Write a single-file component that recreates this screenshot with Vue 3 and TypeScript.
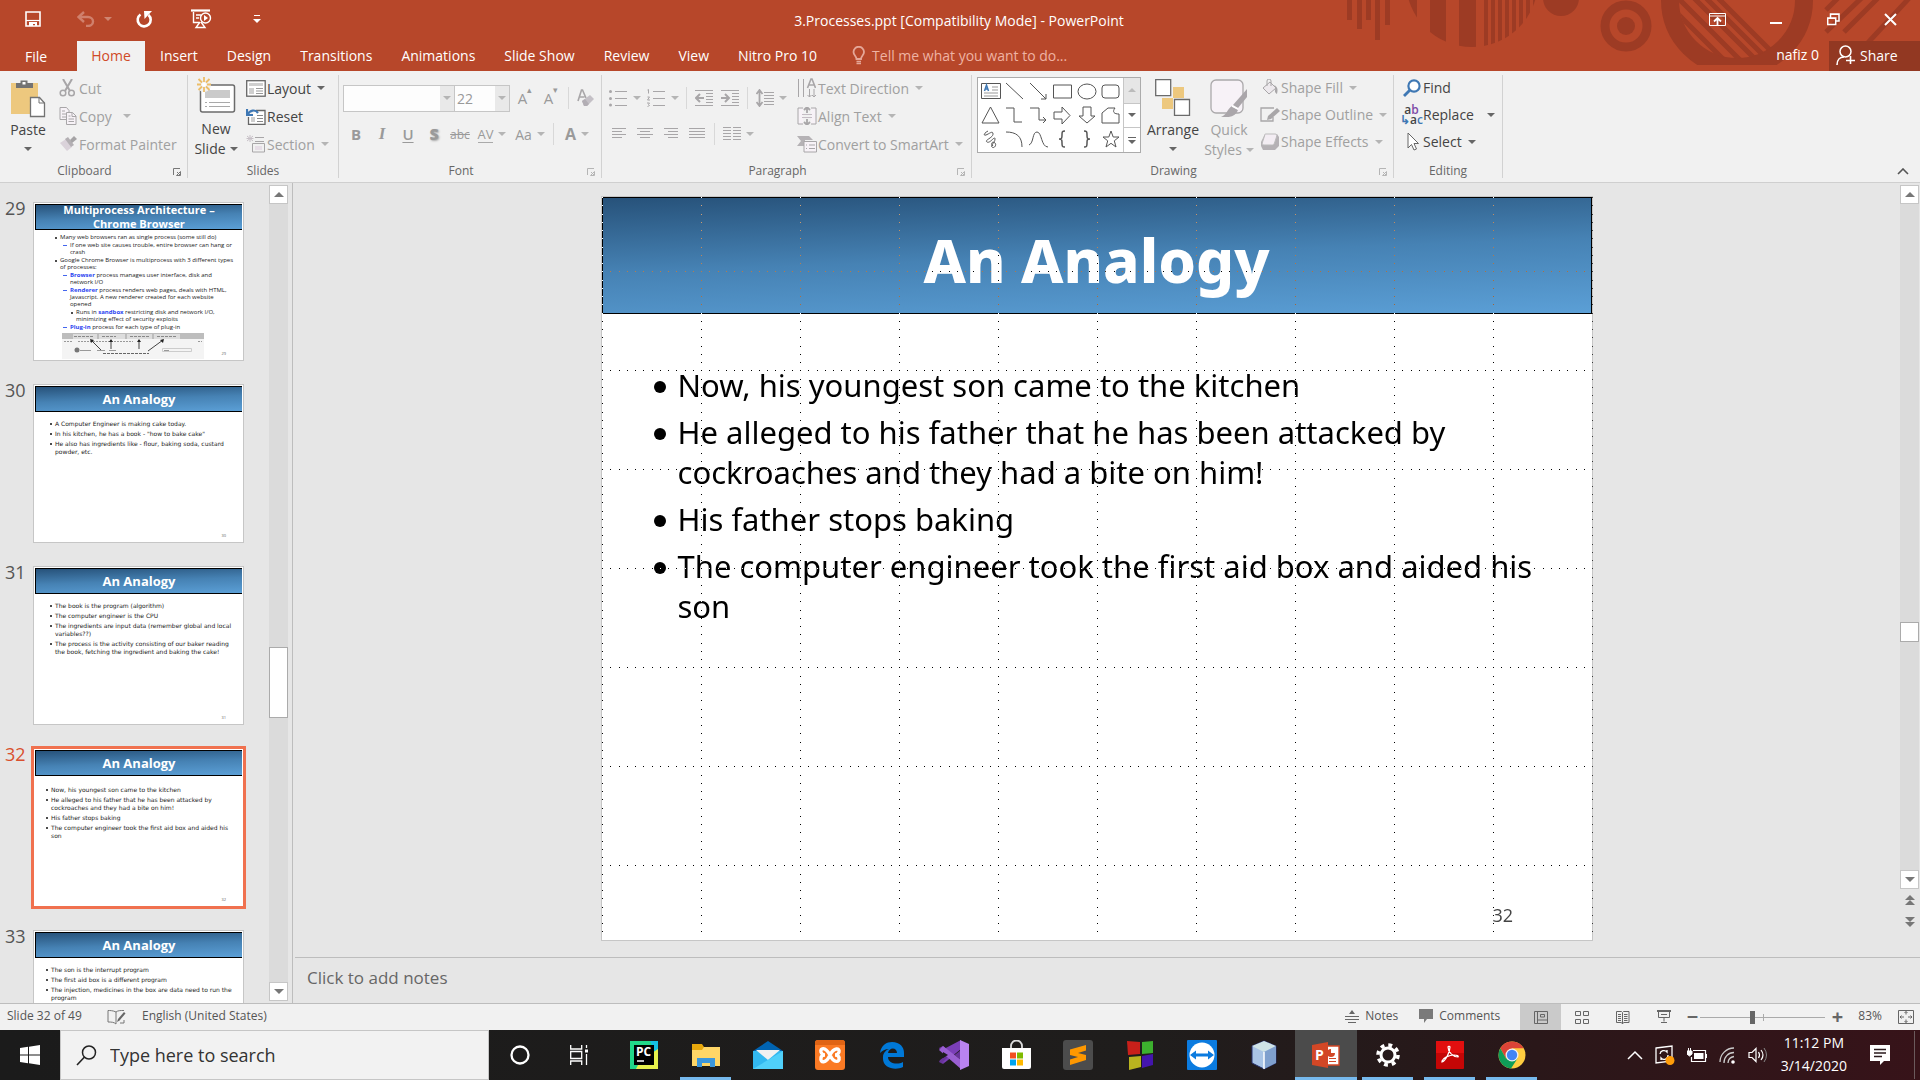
<script setup lang="ts">
import { h, ref } from 'vue'

interface Icon { w: number; h: number; body: string }
interface ThumbLine { level: 1 | 2 | 3; strong?: string; pre?: string; text: string }
interface Thumb { n: number; title: string; kind: string; lines: ThumbLine[] }

const G = '#A8A6A8'
const D = '#666666'
const hl = (x1: number, x2: number, ys: number[]) => ys.map(y => `M${x1} ${y}H${x2}`).join('')

const icons: Record<string, Icon> = {
  save: { w: 16, h: 16, body: '<path d="M1 1h14v14H1z" fill="none" stroke="#fff" stroke-width="1.6"/><path d="M1 9.5h14" stroke="#fff" stroke-width="1.2"/><path d="M4 11h8v4h-2v-2H8v2H4z" fill="#fff"/>' },
  undo: { w: 18, h: 16, body: '<path d="M2 6h9a5 4.5 0 0 1 0 9H9" fill="none" stroke="#D0806C" stroke-width="2.4"/><path d="M7 1L1.500 6L7 11" fill="none" stroke="#D0806C" stroke-width="2.4"/>' },
  redo: { w: 18, h: 18, body: '<path d="M5.500 4.500A6.500 6.500 0 1 0 13.500 5" fill="none" stroke="#fff" stroke-width="2.6"/><path d="M9 1h8l-7.500 8z" fill="#fff"/>' },
  show: { w: 22, h: 20, body: '<path d="M1 1.500h19" stroke="#fff" stroke-width="2.2"/><path d="M3.500 3v10.500H9M6 6h5M6 9h3" fill="none" stroke="#fff" stroke-width="1.4"/><circle cx="15.500" cy="9" r="5" fill="none" stroke="#fff" stroke-width="1.4"/><path d="M14 6l4 3l-4 3z" fill="#fff"/><path d="M10 13l-4 5.500h9L11 13" fill="none" stroke="#fff" stroke-width="1.4"/>' },
  bulb: { w: 14, h: 19, body: '<path d="M4.500 13C4.500 10 1.500 9.500 1.500 6a5.200 5.200 0 0 1 10.500 0C12 9.500 9 10 9 13z" fill="none" stroke="#E5A798" stroke-width="1.8"/><path d="M4.500 15.500h4.500M4.500 17.500h4.500" stroke="#E5A798" stroke-width="1.5"/>' },
  ribopt: { w: 17, h: 13, body: '<path d="M.500 .500h16v12H.500zM.500 3h16" fill="none" stroke="#fff"/><path d="M8.500 12V5.500M5 8.500l3.500-3.500L12 8.500" fill="none" stroke="#fff" stroke-width="1.8"/>' },
  min: { w: 13, h: 13, body: '<path d="M0 10h12" stroke="#fff" stroke-width="2"/>' },
  restore: { w: 13, h: 13, body: '<path d="M.700 5h8v6.500h-8zM3.500 5V1h8.500v7H9" fill="none" stroke="#fff" stroke-width="1.5"/><path d="M3 1.500h9M0 5.500h9" stroke="#fff"/>' },
  close: { w: 13, h: 13, body: '<path d="M1 1l11 11M12 1L1 12" stroke="#fff" stroke-width="2"/>' },
  person: { w: 19, h: 21, body: '<circle cx="9.500" cy="6.500" r="5.500" fill="none" stroke="#fff" stroke-width="1.5"/><path d="M1 20c0-5 3-8 7-8M14.500 11v8M10 15.500h9" fill="none" stroke="#fff" stroke-width="1.6"/>' },
  paste: { w: 36, h: 39, body: '<path d="M1 4h27v31H1z" fill="#EDC87E"/><path d="M6 9V4h4.500V1.500h7V4H23v5z" fill="#737373"/><rect x="12.500" y="3" width="3" height="2.500" fill="#fff"/><path d="M20.500 18.500h9l5 5.500v13.500h-14z" fill="#fff" stroke="#737373" stroke-width="1.3"/><path d="M29 18.500V24h5.500" fill="none" stroke="#737373"/>' },
  cut: { w: 17, h: 18, body: `<path d="M4 0l7 12M13 0L6 12" stroke="${G}" stroke-width="2"/><circle cx="4" cy="14" r="2.800" fill="none" stroke="${G}" stroke-width="1.5"/><circle cx="12.500" cy="14" r="2.800" fill="none" stroke="${G}" stroke-width="1.5"/>` },
  copy: { w: 18, h: 18, body: `<path d="M1 .500h6.500l2.500 3v9H1z" fill="#F7F2F7" stroke="${G}"/><path d="M3 4h3M3 7h4M3 10h4" stroke="${G}"/><path d="M7.500 5.500h6l3.500 3.500v8.500H7.500z" fill="#F7F2F7" stroke="${G}"/><path d="M13 5.500V9.500h4M9.500 9h2M9.500 12h5.500M9.500 14.500h5.500" fill="none" stroke="${G}"/>` },
  painter: { w: 18, h: 16, body: '<path d="M1 7l6-4l6 8l-5 4z" fill="#DAD2DA"/><path d="M6 3l3-2l6 8l-3 2z" fill="#B3AFB3"/><path d="M11 4l4-4l3 3l-5 4z" fill="#A5A3A5"/>' },
  newslide: { w: 40, h: 36, body: '<rect x="4.500" y="8" width="34" height="27" rx="2" fill="#fff" stroke="#6B6B6B" stroke-width="1.5"/><rect x="9" y="13" width="25" height="8" fill="#CACACA"/><path d="M9 25.500h2M13 25.500h21M9 29.500h2M13 29.500h21" stroke="#A9A9A9"/><circle cx="8" cy="8" r="7" fill="#F1F1F1"/><path d="M8 0v5M8 10v5M1 7.500h4M11 7.500h4M2.500 2l3.500 3.500M13.500 2L10 5.500M2.500 13L6 9.500M13.500 13L10 9.500" stroke="#ECBD68" stroke-width="1.8"/><circle cx="8" cy="7.500" r="2" fill="#fff"/>' },
  layout: { w: 20, h: 17, body: '<rect x=".700" y=".700" width="18.500" height="15.500" fill="#fff" stroke="#666" stroke-width="1.3"/><path d="M3 3h14v3H3zM3 8h5v6H3z" fill="#CFCFCF"/><path d="M10 8.500h7M10 11h7M10 13.500h7" stroke="#999"/>' },
  reset: { w: 20, h: 17, body: '<path d="M10 2.500h9v14H2.500V9" fill="#fff" stroke="#666" stroke-width="1.3"/><path d="M5 9h4v5H5z" fill="#CFCFCF"/><path d="M11 7.500h6M11 10.500h6M11 13.500h6" stroke="#888"/><path d="M1 1v6h6M1.500 6.500C4 2 9 1 12 5" fill="none" stroke="#3F78B4" stroke-width="2.2"/>' },
  section: { w: 20, h: 18, body: `<path d="M4 0v7M.500 3.500h7M1 1l6 5M7 1L1 6" stroke="#C7C0C7"/><path d="M9 2.500h9M9 6.500h9M6.500 8.500h12v8.500h-12z" fill="none" stroke="${G}"/><path d="M9 11h7v4H9z" fill="#E7DEE7"/>` },
  eraser: { w: 18, h: 18, body: `<path d="M1 12L4.500 1h1L9 9M2.500 8h5" fill="none" stroke="${G}" stroke-width="1.6"/><path d="M5 12l8-6l4 4l-7 7H7z" fill="#C4C0C6"/><path d="M5 12l3-2l4 5l-2 2H7z" fill="#B2AEB4"/>` },
  bullets: { w: 19, h: 18, body: `<path d="${hl(6, 18, [2.5, 9.5, 16.5])}" stroke="${G}"/><circle cx="1.500" cy="2.500" r="1.500" fill="${G}"/><circle cx="1.500" cy="9.500" r="1.500" fill="${G}"/><circle cx="1.500" cy="16" r="1.500" fill="${G}"/>` },
  numbers: { w: 19, h: 18, body: `<path d="${hl(6, 18, [2.5, 9.5, 16.5])}" stroke="${G}"/><path d="M.500 1l1-.500V4.500M.500 8h2L.500 11h2.500M0 14h2.500l-1 1.500l1 1L.500 17.500" fill="none" stroke="${G}"/>` },
  outdent: { w: 18, h: 18, body: `<path d="${hl(0, 18, [1.5, 16.5])}${hl(11, 18, [4.5, 7.5, 10.5, 13.5])}" stroke="${G}"/><path d="M1 9h8M5 5L1 9l4 4" fill="none" stroke="${G}" stroke-width="2"/>` },
  indent: { w: 18, h: 18, body: `<path d="${hl(0, 18, [1.5, 16.5])}${hl(11, 18, [4.5, 7.5, 10.5, 13.5])}" stroke="${G}"/><path d="M0 9h8M4 5l4 4l-4 4" fill="none" stroke="${G}" stroke-width="2"/>` },
  spacing: { w: 18, h: 18, body: `<path d="${hl(8, 18, [3.5, 6.5, 9.5, 12.5, 15.5])}" stroke="${G}"/><path d="M3.500 1v16M.500 5l3-4l3 4M.500 13l3 4l3-4" fill="none" stroke="${G}" stroke-width="1.8"/>` },
  left: { w: 16, h: 12, body: `<path d="M1 .500h14M1 3.500h10M1 6.500h14M1 9.500h10" stroke="${G}"/>` },
  center: { w: 16, h: 12, body: `<path d="M0 .500h16M3 3.500h10M0 6.500h16M3 9.500h10" stroke="${G}"/>` },
  right: { w: 16, h: 12, body: `<path d="M1 .500h14M5 3.500h10M1 6.500h14M5 9.500h10" stroke="${G}"/>` },
  justify: { w: 16, h: 12, body: `<path d="${hl(0, 16, [0.5, 3.5, 6.5, 9.5])}" stroke="${G}"/>` },
  columns: { w: 18, h: 14, body: `<path d="${hl(0, 8, [0.5, 3.5, 6.5, 9.5, 12.5])}${hl(10, 18, [0.5, 3.5, 6.5, 9.5, 12.5])}" stroke="${G}"/>` },
  textdir: { w: 19, h: 20, body: `<path d="M1.500 1v18M6.500 1v18M12.500 11v8M17 11v8M10.500 17l2 2l2-2M15 17l2 2l2-2" fill="none" stroke="${G}"/><path d="M10.500 10l3.500-9h1l3.500 9M12 7h5" fill="none" stroke="${G}" stroke-width="1.6"/>` },
  aligntext: { w: 20, h: 18, body: `<path d="M6 1H1v16h5M14 1h5v16h-5" fill="#F7F2F7" stroke="${G}"/><path d="M5 7.500h10M5 10.500h10" stroke="#C4BCC4"/><path d="M10 0v6M7 3l3-3l3 3M10 18v-6M7 15l3 3l3-3" fill="none" stroke="${G}" stroke-width="1.8"/>` },
  smartart: { w: 20, h: 17, body: `<path d="M0 0h12l4 4H8v6H0l4-5z" fill="#B5B2B5"/><path d="M7 5.500h12.500v10.500H7z" fill="#F7F2F7" stroke="${G}"/><path d="M9 9h1M12 9h6M9 12.500h1M12 12.500h6" stroke="${G}"/>` },
  fill: { w: 18, h: 17, body: `<path d="M2 9l7-6l6 6l-7 6z" fill="#EDE9ED" stroke="${G}"/><path d="M6 7V2a2 2 0 0 1 4 0v5" fill="none" stroke="${G}"/><path d="M13 6c4 2 4 5 3 9c-2-1-3-4-1-6z" fill="${G}"/>` },
  outline: { w: 20, h: 16, body: `<path d="M14 1H1v13h12V10" fill="none" stroke="${G}" stroke-width="1.3"/><path d="M7 13l1-4l9-8l3 3l-9 8z" fill="${G}"/>` },
  effects: { w: 20, h: 18, body: '<path d="M5 1h12l2 3v9l-4 4H3l-2-4V9z" fill="#B5B1B5"/><path d="M6 1h9c2 0 2 1 1.500 3l-2 6c-1 2-1 2-3 2H4c-2 0-2-1-1.500-3l2-6C5 1 5 1 6 1z" fill="#F3EDF3" stroke="#BBB"/>' },
  arrange: { w: 36, h: 37, body: '<path d="M18 8h11v11H18zM7 19h11v11H7z" fill="#EDC87E"/><path d="M.700 .700h15v16h-15zM19.500 20.500h15v16h-15z" fill="#fff" stroke="#6B6B6B" stroke-width="1.3"/>' },
  quick: { w: 38, h: 38, body: '<rect x="1" y="1" width="32" height="33" rx="5" fill="#F7F2F7" stroke="#ABA9AB" stroke-width="1.3"/><path d="M37 10v8L28 29l-5-3z" fill="#AAA6AA"/><path d="M22 27l6 4c-2 6-8 8-17 7c6-2 6-8 11-11z" fill="#AAA6AA"/><path d="M22 27l6 3" stroke="#fff" stroke-width="1.5"/>' },
  find: { w: 18, h: 18, body: '<circle cx="11" cy="7" r="5.600" fill="#fff" stroke="#3F78B4" stroke-width="2.2"/><path d="M7 11l-6 6" stroke="#3F78B4" stroke-width="2.8"/>' },
  select: { w: 18, h: 19, body: '<path d="M5 1v15l3.500-3.500l2.500 5.500l2.500-1l-2.500-5.500h4.500z" fill="#fff" stroke="#666"/>' },
  launch: { w: 8, h: 8, body: '<path d="M.500 7V.500H7M4 4l3 3M7.500 3.500v4h-4z" fill="none" stroke="currentColor"/>' },
  spell: { w: 19, h: 15, body: '<path d="M9 2v12M9 2C6 .500 3 .500 1 .500v11.500c3 0 6 0 8 2M9 2c2-1.500 4-1.500 8-1.500M17 10v3h-4" fill="none" stroke="#777"/><path d="M10 12l1-3l6-7l1.500 1.500l-6 7z" fill="#666"/>' },
  notes: { w: 14, h: 13, body: `<path d="M4 4l3-4l3 4z" fill="${D}"/><path d="M0 6.500h14M0 9.500h14M3 12.500h8" stroke="${D}"/>` },
  comment: { w: 16, h: 15, body: '<path d="M1 0h14v10H9l-3 4v-4H1z" fill="#7A7A7A"/>' },
  normal: { w: 14, h: 13, body: `<path d="M.500 .500h13v12H.500zM3.500 .500v12M3.500 9h10M6.500 3.500h4v2.500h-4z" fill="none" stroke="${D}"/>` },
  sorter: { w: 14, h: 13, body: `<path d="M.500 .500h5v4h-5zM8.500 .500h5v4h-5zM.500 8.500h5v4h-5zM8.500 8.500h5v4h-5z" fill="none" stroke="${D}"/>` },
  reading: { w: 14, h: 13, body: `<path d="M6.500 2v11M.500 .500h5l1 1l1-1h5.500v11H8l-1.500 1L5 11.500H.500zM2 3.500h3M2 5.500h3M2 7.500h3M2 9.500h3M8 3.500h3.500M8 5.500h3.500M8 7.500h3.500M8 9.500h3.500" fill="none" stroke="${D}"/>` },
  present: { w: 14, h: 14, body: `<path d="M0 1h14" stroke="${D}" stroke-width="2"/><path d="M1.500 2v5.500h11V2M7 7.500v4M4 12.500h6M4 4.500h6" fill="none" stroke="${D}"/>` },
  fit: { w: 16, h: 14, body: `<path d="M.500 .500h15v13H.500z" fill="none" stroke="${D}"/><path d="M8 1.500v3M8 9.500v3M2 7h4M10 7h4M6.500 3l1.500-1.500L9.500 3M6.500 11l1.500 1.500L9.500 11M3.500 5.500L2 7l1.500 1.500M12.500 5.500L14 7l-1.500 1.500" fill="none" stroke="${D}"/>` },
  win: { w: 20, h: 20, body: '<path d="M0 3l8-1.200v7.700H0zM9 1.700L20 0v9.500H9zM0 10.500h8v7.700L0 17zM9 10.500h11V20L9 18.300z" fill="#fff"/>' },
  search: { w: 21, h: 21, body: '<circle cx="13" cy="7.500" r="6.500" fill="none" stroke="#222" stroke-width="1.5"/><path d="M8.500 12L1 20" stroke="#222" stroke-width="1.6"/>' },
  cortana: { w: 20, h: 20, body: '<circle cx="10" cy="10" r="8.500" fill="none" stroke="#fff" stroke-width="2.3"/>' },
  taskview: { w: 25, h: 20, body: '<path d="M.700 0v4h11V0M.700 20v-4h11v4M.700 6.500h11v7H.700zM16.500 0v3M16.500 9v11" fill="none" stroke="#fff" stroke-width="1.3"/><path d="M16.500 4.500v3" stroke="#fff" stroke-width="3"/>' },
  pycharm: { w: 28, h: 28, body: '<path d="M0 0h28v28H0z" fill="#21D789"/><path d="M20 0h8v18z" fill="#14C0E4"/><path d="M28 8v20H6l4-8z" fill="#E7F14C"/><path d="M4 4h20v20H4z" fill="#000"/><path d="M7 20h7" stroke="#fff" stroke-width="1.5"/><text x="6" y="15" font-size="12" font-weight="700" fill="#fff" font-family="Open Sans, sans-serif">PC</text>' },
  explorer: { w: 28, h: 24, body: '<path d="M0 1h10l2 3h14v19H0z" fill="#E8A80C"/><path d="M0 7h10l2-3h16v19H0z" fill="#FFD667"/><path d="M5 24v-9h18v9h-5v-4h-8v4z" fill="#3C97DC"/>' },
  mail: { w: 30, h: 28, body: '<path d="M0 10L15 0l15 10z" fill="#0063B1"/><path d="M0 10h30v18H0z" fill="#32B8F0"/><path d="M3 9h24L15 19z" fill="#F1F1F1"/><path d="M0 28L30 10v18z" fill="#50D0FA"/>' },
  xampp: { w: 30, h: 30, body: '<rect width="30" height="30" rx="3" fill="#FB7A24"/><path d="M0 3q0-3 3-3h24q3 0 3 3v2H0z" fill="#E06414"/><path d="M15 15C10 6 5 8 6 12c1 3 4 3 4 3s-4 0-4 3c-1 5 5 6 9-3c4-8 10-7 9-3c-1 3-4 3-4 3s4 0 4 3c1 4-5 6-9-3z" fill="none" stroke="#fff" stroke-width="3.4"/>' },
  edge: { w: 26, h: 28, body: '<path d="M1 12C2 4 8 1 13 1c8 0 12 5 12 11v4H9c0 7 10 8 15 5v5c-8 4-21 1-20-10c0-4 3-7 6-8c-4 0-7 2-9 4zM9 12h9c0-6-8-6-9 0z" fill="#0078D7"/>' },
  vs: { w: 30, h: 30, body: '<path d="M0 8l4-2L22 20V10L4 24l-4-2l1-2l7-5l-7-5z" fill="#68349A"/><path d="M3 10l19-10v9L6 22l-3 1l8-8z" fill="#7B3FB8"/><path d="M4 6l18 14v9L0 10z" fill="#9A5FD2"/><path d="M4 12v6l5-3z" fill="#1d1c1c"/><path d="M21 0l9 4v22l-9 4z" fill="#B983F0"/>' },
  store: { w: 29, h: 30, body: '<path d="M9 9V6a5 5 0 0 1 11 0v3" fill="none" stroke="#ddd" stroke-width="1.8"/><path d="M0 8h29v19q0 2-2 2H2q-2 0-2-2z" fill="#fff"/><path d="M8 12.500h6v6H8z" fill="#F25022"/><path d="M15 12.500h6v6h-6z" fill="#7FBA00"/><path d="M8 19.500h6v6H8z" fill="#00A4EF"/><path d="M15 19.500h6v6h-6z" fill="#FFB900"/>' },
  sublime: { w: 30, h: 30, body: '<rect width="30" height="30" rx="3" fill="#4C4C4C"/><path d="M7 9.500l16-4.500v5.500l-8 2.500l8 2v5L7 25v-5.500l8-2.500l-8-2z" fill="#FF9800"/>' },
  cubes: { w: 28, h: 30, body: '<path d="M1 1l13 1v12L2 15z" fill="#C9201A"/><path d="M16 2l11-1v12l-11 1z" fill="#3CB02E"/><path d="M3 17l12-1v11L3 30z" fill="#B9B41F"/><path d="M16 16l11-2v11l-11 3z" fill="#4415AD"/>' },
  teamviewer: { w: 30, h: 30, body: '<rect width="30" height="30" rx="1" fill="#0B7BDF"/><circle cx="15" cy="15" r="12.500" fill="#fff"/><path d="M3 15l6-4.500v3h12v-3l6 4.500l-6 4.500v-3H9v3z" fill="#0B7BDF"/>' },
  box: { w: 28, h: 30, body: '<path d="M14 1l12 5v17l-12 6l-12-6V6z" fill="#A9C4E6" stroke="#26306B"/><path d="M14 1l12 5l-12 6L2 6z" fill="#CFE3E6"/><path d="M14 12l12-6v17l-12 6z" fill="#7FA0CE"/><path d="M14 12v17" stroke="#fff" stroke-width="1.5"/>' },
  ppt: { w: 28, h: 28, body: '<path d="M15 5h12v19H15z" fill="#fff" stroke="#D24726" stroke-width="1.4"/><path d="M19 8a4 4 0 1 0 4 4h-4z" fill="#D24726"/><path d="M17 17.500h7M17 20.500h7" stroke="#D24726"/><path d="M0 4l16-3v26L0 24z" fill="#D24726"/><text x="3" y="19" font-size="14" font-weight="700" fill="#fff" font-family="Open Sans, sans-serif">P</text>' },
  gear: { w: 26, h: 26, body: '<circle cx="13" cy="13" r="7" fill="none" stroke="#fff" stroke-width="3"/><circle cx="13" cy="13" r="10" fill="none" stroke="#fff" stroke-width="3.600" stroke-dasharray="3.900 3.954"/>' },
  acrobat: { w: 28, h: 28, body: '<rect width="28" height="28" rx="1" fill="#C40606"/><path d="M0 0h28v12H0z" fill="#F01414" opacity=".7"/><path d="M6 21c3-1 8-9 8-15c0-1-2-1-2 0c0 5 5 10 10 10c1-1-1-2-4-2c-5 0-11 3-12 6c0 1 0 1 0 1z" fill="none" stroke="#fff" stroke-width="1.2"/>' },
  chrome: { w: 28, h: 28, body: '<circle cx="14" cy="14" r="13.500" fill="#FFCD40"/><path d="M2.300 7.300A13.500 13.500 0 0 1 25.700 7.300H14L8 17.500z" fill="#DB4437"/><path d="M2.300 7.300A13.500 13.500 0 0 0 13 27.500L19.500 17.500L8 17.500z" fill="#0F9D58"/><circle cx="14" cy="14" r="6.500" fill="#F1F1F1"/><circle cx="14" cy="14" r="5.200" fill="#4285F4"/>' },
  up: { w: 16, h: 10, body: '<path d="M1 9l7-7l7 7" fill="none" stroke="#fff" stroke-width="1.5"/>' },
  update: { w: 20, h: 20, body: '<path d="M1 3l16-2v15l-16 2z" fill="none" stroke="#fff" stroke-width="1.3"/><path d="M5 9a4 4 0 0 1 7-2v-2M13 10a4 4 0 0 1-7 3v2" fill="none" stroke="#fff" stroke-width="1.3"/><circle cx="15" cy="15.500" r="4.500" fill="#FF9D0A"/>' },
  battery: { w: 20, h: 14, body: '<path d="M7 5h9.500v6H7z" fill="#fff"/><path d="M6 2.500h12.500v11H4.500V9M19.500 6v4" fill="none" stroke="#fff" stroke-width="1.2"/><path d="M0 3h5v3L2.500 8L0 6zM1.500 0v3M3.500 0v3" fill="#fff" stroke="#fff"/>' },
  wifi: { w: 17, h: 17, body: '<path d="M1 15A14 14 0 0 1 15 1M5 16A10 10 0 0 1 15 5.500M9 16a7 7 0 0 1 6-6.500" fill="none" stroke="#ccc" stroke-width="1.3"/><circle cx="14" cy="15" r="1.800" fill="#fff"/>' },
  volume: { w: 20, h: 16, body: '<path d="M1 5.500h3l4-4v13l-4-4H1z" fill="none" stroke="#fff" stroke-width="1.2"/><path d="M10.500 5q2 3 0 6M13 3q4 5 0 10" fill="none" stroke="#fff" stroke-width="1.2"/><path d="M16 1q5 7 0 14" fill="none" stroke="#888"/>' },
  action: { w: 20, h: 20, body: '<path d="M0 0h20v16h-6l-4 4v-4H0z" fill="#fff"/><path d="M4 4.500h12M4 8h12M4 11.500h8" stroke="#2a1a1c" stroke-width="1.3"/>' },
  chevup: { w: 12, h: 7, body: '<path d="M1 6l5-5l5 5" fill="none" stroke="#555" stroke-width="1.6"/>' }
}

const tabs = ['Insert', 'Design', 'Transitions', 'Animations', 'Slide Show', 'Review', 'View', 'Nitro Pro 10']

const shapes: string[] = [
  '<path d="M.500 1.500h19v15H.500z"/><path d="M11 5h6M11 8h6M3 11h14M3 14h14" stroke="#999"/><path d="M3.500 9l2-6l2 6M4 7h3" stroke="#3F78B4" stroke-width="1.5"/>',
  '<path d="M1 1l17 16"/>', '<path d="M1 1l16 16M17 12v5h-5"/>', '<path d="M.500 3h18v13H.500z"/>',
  '<ellipse cx="10" cy="9.500" rx="9" ry="7.500"/>', '<rect x="1" y="3" width="17" height="13" rx="3"/>',
  '<path d="M9.500 1l8.500 16H1z"/>', '<path d="M1 2h8v14h8"/>', '<path d="M1 2h9v12h7M14 11l3 3l-3 3"/>',
  '<path d="M1 6h8V1l8 8.500l-8 8.500v-5H1z"/>', '<path d="M6 1h8v9h4l-8 7l-8-7h4z"/>', '<path d="M1 17V7l6-5h7c-3 4-1 6 4 6v9z"/>',
  '<path d="M7 1C3 3 2 6 5 5s7-5 7-1s-9 6-6 8s8-7 8-3s-5 6-3 8s5-2 3-4s-5 0-2 3"/>', '<path d="M1 2c10 0 16 4 16 15"/>',
  '<path d="M0 15C5 13 3 2 8 2s4 15 11 15"/>', '<path d="M12 1c-3 0-3 1-3 4s0 4-3 4c3 0 3 1 3 4s0 4 3 4" stroke-width="1.5"/>',
  '<path d="M7 1c3 0 3 1 3 4s0 4 3 4c-3 0-3 1-3 4s0 4-3 4" stroke-width="1.5"/>',
  '<path d="M10 1l2.200 6H18l-4.700 3.800L15 17l-5-3.700L5 17l1.700-6.200L2 7h5.800z"/>'
]

const slideItems = [
  'Now, his youngest son came to the kitchen',
  'He alleged to his father that he has been attacked by\ncockroaches and they had a bite on him!',
  'His father stops baking',
  'The computer engineer took the first aid box and aided his\nson'
]

const one = (texts: string[]): ThumbLine[] => texts.map(text => ({ level: 1, text }))
const thumbs: Thumb[] = [
  { n: 29, title: 'Multiprocess Architecture –\nChrome Browser', kind: 'dense', lines: [
    { level: 1, text: 'Many web browsers ran as single process (some still do)' },
    { level: 2, text: 'If one web site causes trouble, entire browser can hang or\ncrash' },
    { level: 1, text: 'Google Chrome Browser is multiprocess with 3 different types\nof processes:' },
    { level: 2, strong: 'Browser', text: ' process manages user interface, disk and\nnetwork I/O' },
    { level: 2, strong: 'Renderer', text: ' process renders web pages, deals with HTML,\nJavascript. A new renderer created for each website\nopened' },
    { level: 3, pre: 'Runs in ', strong: 'sandbox', text: ' restricting disk and network I/O,\nminimizing effect of security exploits' },
    { level: 2, strong: 'Plug-in', text: ' process for each type of plug-in' }] },
  { n: 30, title: 'An Analogy', kind: 'wide', lines: one(['A Computer Engineer is making cake today.', 'In his kitchen, he has a book - "how to bake cake"', 'He also has ingredients like - flour, baking soda, custard\npowder, etc.']) },
  { n: 31, title: 'An Analogy', kind: 'wide', lines: one(['The book is the program (algorithm)', 'The computer engineer is the CPU', 'The ingredients are input data (remember global and local\nvariables??)', 'The process is the activity consisting of our baker reading\nthe book, fetching the ingredient and baking the cake!']) },
  { n: 32, title: 'An Analogy', kind: 'sel', lines: one(slideItems) },
  { n: 33, title: 'An Analogy', kind: 'plain', lines: one(['The son is the interrupt program', 'The first aid box is a different program', 'The injection, medicines in the box are data need to run the\nprogram']) }
]

/* Gridline dots: one pixel every twelfth of a 99px cell. */
const dot = (x: number, y: number) => `M${x} ${y}h1v1h-1z`
const gridPath = (() => {
  let d = ''
  for (let c = 0; c <= 10; c++) for (let i = 0; i < 90; i++) d += dot(c * 99, Math.round(i * 8.25))
  for (let r = 0; r < 7; r++) for (let i = 1; i < 120; i++) if (i % 12) d += dot(Math.round(i * 8.25), 74 + r * 99)
  return d
})()

const apps: { id: string; label: string; run?: boolean; active?: boolean }[] = [
  { id: 'cortana', label: 'Cortana' }, { id: 'taskview', label: 'Task View' }, { id: 'pycharm', label: 'PyCharm' },
  { id: 'explorer', label: 'File Explorer', run: true }, { id: 'mail', label: 'Mail' }, { id: 'xampp', label: 'XAMPP' },
  { id: 'edge', label: 'Edge' }, { id: 'vs', label: 'Visual Studio' }, { id: 'store', label: 'Store' },
  { id: 'sublime', label: 'Sublime Text' }, { id: 'cubes', label: 'Cubes' }, { id: 'teamviewer', label: 'TeamViewer' },
  { id: 'box', label: 'VirtualBox' }, { id: 'ppt', label: 'PowerPoint', active: true }, { id: 'gear', label: 'Settings', run: true },
  { id: 'acrobat', label: 'Acrobat', run: true }, { id: 'chrome', label: 'Chrome', run: true }
]
const views = ['normal', 'sorter', 'reading', 'present']

const zoom = ref(41)
const size = ref('22')

const Ico = (p: { n: string }) => {
  const i = icons[p.n]
  return h('svg', { class: 'ico', width: i.w, height: i.h, viewBox: `0 0 ${i.w} ${i.h}`, innerHTML: i.body, 'aria-hidden': 'true' })
}
Ico.props = ['n']
</script>

<template>
  <div class="app">
    <header class="top">
      <svg class="decor" width="600" height="71" viewBox="0 0 600 71" fill="#9D3B24" aria-hidden="true">
        <defs>
          <clipPath id="disc"><circle cx="152" cy="-19" r="66" /></clipPath>
          <clipPath id="inner"><circle cx="417" cy="1" r="58" /></clipPath>
          <clipPath id="cutoff"><path d="M0 0h600v65H0z" /></clipPath>
        </defs>
        <path d="M27 0h5v20h-5zM37 0h5v29h-5zM46 0h5v20h-5zM55 0h5v40h-5zM65 0h5v25h-5z" />
        <path clip-path="url(#disc)" d="M80 0h17v50H80zM110 0h16v50h-16zM139 0h17v50h-17zM164 0h4v50h-4zM171 0h4v50h-4zM178 0h4v50h-4zM185 0h4v50h-4zM192 0h4v50h-4zM199 0h4v50h-4zM206 0h4v50h-4zM213 0h4v50h-4z" />
        <circle cx="241" cy="-2" r="18" />
        <circle cx="306" cy="26" r="21" fill="none" stroke="#9D3B24" stroke-width="9" /><circle cx="306" cy="26" r="9" />
        <circle clip-path="url(#cutoff)" cx="417" cy="0" r="67" fill="none" stroke="#9D3B24" stroke-width="18" />
        <path clip-path="url(#inner)" d="M340 -4l90 90M356 -4l90 90M368 -8l90 90M380 -8l90 90M392 -8l90 90" fill="none" stroke="#9D3B24" stroke-width="5" />
        <path d="M506 10L522 -6M506 32L550 -10M524 32L566 -10M544 47L592 -5" stroke="#9D3B24" stroke-width="5" />
      </svg>
      <div class="titlebar">
        <div class="qat">
          <button aria-label="Save"><Ico n="save" /></button>
          <button class="undo" aria-label="Undo"><Ico n="undo" /><i class="car dim" /></button>
          <button class="redo" aria-label="Repeat"><Ico n="redo" /></button>
          <button aria-label="Start show"><Ico n="show" /></button>
          <button class="more" aria-label="Customize"><i class="bar" /><i class="car white" /></button>
        </div>
        <h1>3.Processes.ppt [Compatibility Mode] - PowerPoint</h1>
        <div class="win">
          <button aria-label="Ribbon options"><Ico n="ribopt" /></button>
          <button aria-label="Minimize"><Ico n="min" /></button>
          <button aria-label="Restore"><Ico n="restore" /></button>
          <button aria-label="Close"><Ico n="close" /></button>
        </div>
      </div>
      <nav class="tabs">
        <button class="file">File</button>
        <button class="home">Home</button>
        <button v-for="t in tabs" :key="t">{{ t }}</button>
        <button class="tell"><Ico n="bulb" />Tell me what you want to do...</button>
        <span class="user">nafiz 0</span>
        <button class="share"><Ico n="person" />Share</button>
      </nav>
    </header>

    <section class="ribbon">
      <div class="group clip">
        <div class="body">
          <button class="big"><Ico n="paste" /><span>Paste</span><i class="car" /></button>
          <div class="col off">
            <button><b><Ico n="cut" /></b>Cut</button>
            <button><b><Ico n="copy" /></b>Copy<i class="car far" /></button>
            <button><b><Ico n="painter" /></b>Format Painter</button>
          </div>
        </div>
        <footer>Clipboard<Ico class="launch on" n="launch" /></footer>
      </div>
      <div class="group slides">
        <div class="body">
          <button class="big"><Ico n="newslide" /><span>New</span><span>Slide <i class="car" /></span></button>
          <div class="col">
            <button><b><Ico n="layout" /></b>Layout<i class="car" /></button>
            <button><b><Ico n="reset" /></b>Reset</button>
            <button class="off"><b><Ico n="section" /></b>Section<i class="car" /></button>
          </div>
        </div>
        <footer>Slides</footer>
      </div>
      <div class="group font">
        <div class="rows off">
          <div class="row">
            <label class="combo name"><select aria-label="Font name"><option></option></select><i class="car" /></label>
            <label class="combo size"><select v-model="size" aria-label="Font size"><option>22</option></select><i class="car" /></label>
            <button class="cell grow">A<sup>▴</sup></button>
            <button class="cell shrink">A<sup>▾</sup></button>
            <i class="sep" />
            <button class="cell" aria-label="Clear formatting"><Ico n="eraser" /></button>
          </div>
          <div class="row">
            <button class="cell bold">B</button>
            <button class="cell ital">I</button>
            <button class="cell under">U</button>
            <button class="cell shadow">S</button>
            <button class="cell strike">abc</button>
            <button class="cell wide av"><span>AV</span><i class="car" /></button>
            <button class="cell wide">Aa<i class="car" /></button>
            <i class="sep" />
            <button class="cell wide fc">A<i class="car" /></button>
          </div>
        </div>
        <footer>Font<Ico class="launch" n="launch" /></footer>
      </div>
      <div class="group para">
        <div class="body off">
          <div class="rows">
            <div class="row">
              <button class="cell wide" aria-label="Bullets"><Ico n="bullets" /><i class="car" /></button>
              <button class="cell wide" aria-label="Numbering"><Ico n="numbers" /><i class="car" /></button>
              <i class="sep" />
              <button class="cell" aria-label="Decrease indent"><Ico n="outdent" /></button>
              <button class="cell" aria-label="Increase indent"><Ico n="indent" /></button>
              <i class="sep" />
              <button class="cell wide" aria-label="Line spacing"><Ico n="spacing" /><i class="car" /></button>
            </div>
            <div class="row">
              <button v-for="a in ['left', 'center', 'right', 'justify']" :key="a" class="cell" :aria-label="a"><Ico :n="a" /></button>
              <i class="sep" />
              <button class="cell wide" aria-label="Columns"><Ico n="columns" /><i class="car" /></button>
            </div>
          </div>
          <div class="col">
            <button><b><Ico n="textdir" /></b>Text Direction<i class="car" /></button>
            <button><b><Ico n="aligntext" /></b>Align Text<i class="car" /></button>
            <button><b><Ico n="smartart" /></b>Convert to SmartArt<i class="car" /></button>
          </div>
        </div>
        <footer>Paragraph<Ico class="launch" n="launch" /></footer>
      </div>
      <div class="group draw">
        <div class="body">
          <div class="gallery">
            <div class="shapes">
              <button v-for="(s, i) in shapes" :key="i" :aria-label="'Shape ' + (i + 1)"><svg width="20" height="19" viewBox="0 0 20 19" fill="none" stroke="#555" v-html="s" /></button>
            </div>
            <div class="gscroll">
              <button class="offb" aria-label="Up"><i class="car upc" /></button>
              <button aria-label="Down"><i class="car" /></button>
              <button aria-label="More shapes"><i class="gbar" /><i class="car" /></button>
            </div>
          </div>
          <button class="big arr"><Ico n="arrange" /><span>Arrange</span><i class="car" /></button>
          <button class="big off qs"><Ico n="quick" /><span>Quick</span><span>Styles <i class="car" /></span></button>
          <div class="col off tight">
            <button><b><Ico n="fill" /></b>Shape Fill<i class="car" /></button>
            <button><b><Ico n="outline" /></b>Shape Outline<i class="car" /></button>
            <button><b><Ico n="effects" /></b>Shape Effects<i class="car" /></button>
          </div>
        </div>
        <footer>Drawing<Ico class="launch" n="launch" /></footer>
      </div>
      <div class="group edit">
        <div class="body">
          <div class="col tight">
            <button><b><Ico n="find" /></b>Find</button>
            <button><b class="abac"><span>a<em>b</em></span><span><u>↳</u>a<u>c</u></span></b>Replace<i class="car far" /></button>
            <button><b><Ico n="select" /></b>Select<i class="car" /></button>
          </div>
        </div>
        <footer>Editing</footer>
      </div>
      <button class="collapse" aria-label="Collapse ribbon"><Ico n="chevup" /></button>
    </section>

    <main class="work">
      <aside class="pane">
        <div class="list">
          <div v-for="t in thumbs" :key="t.n" class="entry" :class="t.kind">
            <span class="num">{{ t.n }}</span>
            <article class="thumb">
              <h3>{{ t.title }}</h3>
              <ul>
                <li v-for="(l, i) in t.lines" :key="i" :class="'l' + l.level"><span>{{ l.pre }}<strong v-if="l.strong">{{ l.strong }}</strong>{{ l.text }}</span></li>
              </ul>
              <svg v-if="t.n === 29" class="shot" width="142" height="26" viewBox="0 0 142 26" aria-hidden="true">
                <path d="M0 0h142v26H0z" fill="#F4F4F4" /><path d="M0 0h142v6H0z" fill="#BDBDBD" /><path d="M11 1h24v5H11zM37 1h26v5H37zM65 1h25v5H65zM92 1h26v5H92z" fill="#DDD" />
                <path d="M12 3.5h20M40 3.5h14M68 3.5h20M95 3.5h20" stroke="#888" stroke-dasharray="3 1" /><path d="M2 8.5h9M16 8.5h55M136 8.5h4" stroke="#999" stroke-dasharray="2 1" />
                <path d="M40 18L29 7M49 16V7M77 16V7M86 18L101 7" stroke="#444" /><path d="M28 6l4 1l-3 3zM47 9l2-3l2 3zM75 9l2-3l2 3zM102 6l-4 1l3 3z" fill="#222" /><circle cx="15" cy="17" r="2.5" fill="#777" />
                <path d="M18 17.5h11M35 17.5h8M47 17.5h7M102 17.5h5" stroke="#999" /><path d="M100.5 15.5h29v3h-29z" fill="none" stroke="#CCC" /><path d="M41 20.5h46" stroke="#666" stroke-dasharray="3 1" />
              </svg>
              <small v-if="t.kind !== 'plain'">{{ t.n }}</small>
            </article>
          </div>
        </div>
        <div class="vbar">
          <button aria-label="Scroll up"><i class="car upc" /></button>
          <div class="track left"><i class="knob" /></div>
          <button aria-label="Scroll down"><i class="car" /></button>
        </div>
      </aside>
      <section class="stage">
        <div class="canvas">
          <article class="slide">
            <h2>An Analogy</h2>
            <ul><li v-for="s in slideItems" :key="s">{{ s }}</li></ul>
            <span class="pageno">32</span>
            <svg class="grid" width="992" height="745" viewBox="0 0 992 745" shape-rendering="crispEdges" aria-hidden="true"><path :d="gridPath" fill="#fff" /></svg>
          </article>
          <div class="vbar">
            <button aria-label="Scroll up"><i class="car upc" /></button>
            <div class="track right"><i class="knob" /></div>
            <button aria-label="Scroll down"><i class="car" /></button>
            <button class="dbl" aria-label="Previous slide"><i class="car upc" /><i class="car upc" /></button>
            <button class="dbl" aria-label="Next slide"><i class="car" /><i class="car" /></button>
          </div>
        </div>
        <div class="notes">Click to add notes</div>
      </section>
    </main>

    <footer class="status">
      <span class="count">Slide 32 of 49</span>
      <Ico n="spell" />
      <span class="lang">English (United States)</span>
      <button class="sn"><Ico n="notes" />Notes</button>
      <button class="sc"><Ico n="comment" />Comments</button>
      <button v-for="(v, i) in views" :key="v" class="view" :class="{ cur: i === 0 }" :aria-label="v"><Ico :n="v" /></button>
      <button class="zb" aria-label="Zoom out">−</button>
      <input v-model="zoom" type="range" min="0" max="100" aria-label="Zoom" />
      <button class="zb" aria-label="Zoom in">+</button>
      <span class="pct">83%</span>
      <Ico n="fit" />
    </footer>

    <footer class="taskbar">
      <button class="start" aria-label="Start"><Ico n="win" /></button>
      <label class="find"><Ico n="search" /><input type="text" placeholder="Type here to search" aria-label="Search" /></label>
      <button v-for="a in apps" :key="a.id" class="app-btn" :class="{ run: a.run, active: a.active }" :aria-label="a.label"><Ico :n="a.id" /></button>
      <div class="tray">
        <Ico n="up" /><Ico n="update" /><Ico n="battery" /><Ico n="wifi" /><Ico n="volume" />
        <div class="clock"><span>11:12 PM</span><span>3/14/2020</span></div>
        <Ico n="action" />
        <i class="edge" />
      </div>
    </footer>
  </div>
</template>

<style>
html, body { margin: 0; background: #e6e6e6; }
.ico { flex: none; display: block; }
</style>

<style scoped>
.app { height: 100vh; display: flex; flex-direction: column; overflow: hidden; font-family: "Open Sans", "Noto Sans", sans-serif; font-size: 14px; color: #444; background: #e6e6e6; }
.app * { box-sizing: border-box; }
button { font: inherit; color: inherit; background: none; border: 0; padding: 0; display: flex; align-items: center; white-space: nowrap; }
h1, h2, h3, ul { margin: 0; padding: 0; font-weight: 400; list-style: none; }

.car { flex: none; display: block; width: 0; height: 0; border: 4px solid transparent; border-top-color: #666; border-bottom: 0; }
.car.upc { border-top: 0; border-bottom: 4px solid #777; }
.off .car { border-top-color: #b5b5b5; }
.car.dim { border-top-color: #cf8571; }
.car.white { border-top-color: #fff; }

.top { flex: none; position: relative; background: #b7472a; color: #fff; height: 71px; }
.decor { position: absolute; right: 0; top: 0; }
.titlebar { position: relative; display: flex; justify-content: space-between; height: 41px; }
.titlebar h1 { position: absolute; left: 0; right: 0; text-align: center; font-size: 14px; line-height: 41px; padding-right: 2px; pointer-events: none; }
.qat { display: flex; align-items: center; padding: 0 0 3px 25px; }
.qat button { margin-right: 39px; }
.qat .undo { gap: 9px; margin: 0 23px 0 -3px; }
.qat .redo { margin-right: 37px; }
.qat .more { flex-direction: column; gap: 3px; margin-left: 2px; }
.bar { width: 6px; height: 1px; background: #fff; }
.win { display: flex; align-items: center; gap: 44px; padding: 0 23px 3px 0; }
.tabs { position: relative; display: flex; height: 30px; }
.tabs button { padding: 0 14px 2px 15px; }
.tabs .file { width: 77px; padding: 0 0 0 25px; }
.tabs .home { width: 68px; background: #f1f1f1; color: #d04a27; justify-content: center; padding: 0 0 2px; }
.tabs .tell { gap: 6px; color: #efb3a3; margin-left: 6px; }
.user { margin-left: auto; line-height: 28px; padding-right: 10px; }
.tabs .share { width: 91px; background: #923822; padding: 0 0 2px 7px; gap: 5px; }

.ribbon { flex: none; position: relative; display: flex; height: 112px; padding: 4px 0; background: #f1f1f1; border-bottom: 1px solid #cfcfcf; }
.group { flex: none; display: flex; flex-direction: column; border-right: 1px solid #d2d2d2; }
.clip { width: 188px; } .slides { width: 151px; } .font { width: 263px; } .para { width: 370px; } .draw { width: 422px; } .edit { width: 109px; }
.body { flex: 1; display: flex; }
.group > footer { flex: none; position: relative; height: 14px; line-height: 14px; font-size: 12px; text-align: center; color: #666; }
.clip > footer, .font > footer, .para > footer, .draw > footer { padding-right: 18px; }
.launch { position: absolute; right: 6px; top: 4px; color: #b5b5b5; }
.launch.on { color: #777; }
.off { color: #a0a0a0; }
.big { flex-direction: column; align-self: flex-start; width: 56px; padding-top: 4px; }
.big span { display: flex; align-items: center; gap: 4px; line-height: 20px; }
.big span:nth-of-type(1) { margin-top: 2px; }
.big > .car { margin-top: 7px; }
.slides .big { padding-top: 2px; }
.slides .big svg { margin-bottom: 4px; }
.col { display: flex; flex-direction: column; align-items: flex-start; }
.col button { height: 28px; padding-bottom: 2px; }
.col.tight button { height: 27px; }
.col b { width: 23px; display: flex; justify-content: center; font-weight: 400; }
.col .car { margin-left: 6px; }
.col .far { margin-left: 11px; }
.rows { flex: 1; display: flex; flex-direction: column; gap: 10px; padding: 10px 0 0 4px; }
.para .rows { flex: none; width: 193px; }
.row { display: flex; align-items: center; height: 26px; }
.font > .rows { color: #9a9a9a; }
.cell { width: 26px; height: 26px; justify-content: center; }
.cell.wide { width: 38px; gap: 5px; }
.sep { width: 1px; height: 22px; margin: 0 4px; background: #d8d8d8; }
.combo { display: flex; align-items: center; height: 27px; border: 1px solid #c6c6c6; background: linear-gradient(to left, #e9e9e9 14px, #fdfdfd 14px); }
.combo select { flex: 1; min-width: 0; height: 25px; appearance: none; border: 0; background: none; font: inherit; font-size: 14px; color: #999; padding: 0 2px; }
.combo .car { margin-right: 3px; }
.combo.name { width: 112px; } .combo.size { width: 55px; border-left: 0; }
.grow, .shrink { font-size: 15px; }
.grow { margin-left: 2px; }
.cell sup { font-size: 9px; line-height: 10px; align-self: flex-start; }
.bold { font-weight: 700; font-size: 15px; }
.ital { font-family: "Liberation Serif", serif; font-weight: 700; font-style: italic; font-size: 17px; }
.under { font-weight: 600; font-size: 15px; text-decoration: underline; text-underline-offset: 2px; }
.shadow { font-weight: 800; font-size: 16px; text-shadow: 1px 1px 2px #aaa; }
.strike { text-decoration: line-through; font-size: 12px; }
.av span { font-size: 13px; border-bottom: 1px solid #aaa; line-height: 16px; }
.fc { font-weight: 700; font-size: 16px; }
.gallery { flex: none; display: flex; height: 76px; margin: 2px 0 0 5px; border: 1px solid #ababab; background: #fff; }
.shapes { display: grid; grid-template-columns: repeat(6, 24px); grid-template-rows: repeat(3, 24px); padding: 1px 0 0 1px; }
.shapes button { justify-content: center; }
.gscroll { width: 17px; display: grid; grid-template-rows: repeat(3, 1fr); border-left: 1px solid #c6c6c6; }
.gscroll button { flex-direction: column; gap: 2px; justify-content: center; }
.gscroll button + button { border-top: 1px solid #c6c6c6; }
.gscroll .offb { background: #e6e6e6; }
.gscroll .offb .car { border-bottom-color: #bbb; }
.gbar { width: 8px; height: 1px; background: #666; }
.arr { width: 60px; margin-left: 2px; }
.arr svg { margin-bottom: 2px; }
.qs { width: 52px; }
.qs svg { margin-bottom: 1px; }
.draw .col { margin-left: 3px; }
.edit .col { margin-left: 6px; }
.edit .col .far { margin-left: 13px; }
.abac { flex-direction: column; align-items: center; font-size: 12px; line-height: 10px; }
.col .abac span { font-weight: 600; }
.abac em { font-style: normal; color: #7d4aa6; }
.abac u { text-decoration: none; color: #3f78b4; }
.collapse { position: absolute; right: 11px; bottom: 7px; }

.work { flex: 1; min-height: 0; display: flex; }
.pane { flex: none; width: 293px; display: flex; border-right: 1px solid #bdbdbd; padding-top: 2px; }
.list { flex: 1; min-height: 0; overflow: hidden; display: flex; flex-direction: column; gap: 23px; padding-top: 17px; }
.entry { flex: none; display: flex; }
.num { width: 33px; padding-left: 5px; font-size: 18px; line-height: 12px; color: #555; }
.thumb { position: relative; width: 211px; height: 159px; padding: 1px; background: #fff; border: 1px solid #c6c6c6; overflow: hidden; }
.thumb h3 { height: 26px; border: 1px solid #000; border-right: 0; display: flex; align-items: center; justify-content: center; background: linear-gradient(178deg, #27527a, #4682b4 50%, #5b9fd6); color: #fff; font-weight: 700; font-size: 13px; line-height: 14px; text-align: center; white-space: pre; overflow: hidden; }
.thumb ul { font-family: "DejaVu Sans", sans-serif; font-size: 6px; line-height: 8px; color: #222; display: flex; flex-direction: column; gap: 2px; padding: 8px 0 0 20px; }
.thumb li { display: flex; margin-left: -5px; white-space: pre; }
.thumb li::before { content: ""; flex: none; width: 2px; height: 2px; margin: 3px 3px 0 0; border-radius: 1px; background: #111; }
.thumb small { position: absolute; right: 17px; bottom: 4px; font-size: 4px; line-height: 5px; color: #666; }
.sel .thumb { outline: 3px solid #f0714f; outline-offset: -1px; overflow: visible; }
.sel .num { color: #d9502e; }
.thumb ul { min-width: 0; }
.sel ul { padding: 10px 0 0 16px; }
.plain ul { padding-left: 16px; }
.dense h3 { font-size: 11px; }
.dense ul { font-family: "Open Sans", sans-serif; line-height: 7px; gap: 1px; padding: 4px 0 0 25px; }
.dense .l2 { margin-left: 3px; }
.dense .l2::before { width: 4px; height: 1px; border-radius: 0; margin-top: 3px; background: #4466ee; }
.dense .l3 { margin-left: 11px; }
.dense strong { color: #2b45f0; }
.shot { position: absolute; left: 28px; top: 130px; }
.vbar { flex: none; width: 19px; display: flex; flex-direction: column; }
.pane .vbar { margin-right: 4px; padding-bottom: 2px; }
.vbar button { flex: none; height: 19px; justify-content: center; background: #fff; border: 1px solid #c6c6c6; }
.vbar .car { border-width: 5px; border-bottom-width: 0; border-top-color: #777; }
.vbar .upc { border-bottom-width: 5px; border-top-width: 0; }
.track { flex: 1; display: grid; background: #dbdbdb; }
.track::before { content: ""; }
.knob { background: #fff; border: 1px solid #ababab; }
.track.left { grid-template-rows: 443px 71px 1fr; }
.track.right { grid-template-rows: 418px 20px 1fr; }
.vbar .dbl { flex-direction: column; background: none; border: 0; height: 22px; }

.stage { flex: 1; min-width: 0; display: flex; flex-direction: column; }
.canvas { flex: 1; min-height: 0; display: flex; padding-top: 2px; }
.slide { position: relative; isolation: isolate; flex: none; width: 992px; height: 745px; margin: 11px auto 0; background: #fff; border: 1px solid #c6c6c6; }
.slide h2 { height: 117px; border: 1px solid #000; background: linear-gradient(178deg, #27527a, #4682b4 50%, #5b9fd6); color: #fff; font-family: "Noto Sans", sans-serif; font-weight: 800; font-size: 60px; line-height: 124px; text-align: center; }
.slide ul { padding: 51px 0 0 76px; display: flex; flex-direction: column; gap: 7px; font-family: "Noto Sans", sans-serif; font-size: 31px; line-height: 40px; color: #000; }
.slide li { position: relative; white-space: pre; }
.slide li::before { content: ""; position: absolute; left: -24px; top: 16px; width: 12px; height: 12px; border-radius: 6px; background: #000; }
.pageno { position: absolute; left: 891px; bottom: 13px; font-size: 18px; line-height: 24px; color: #444; }
.grid { position: absolute; left: 0; top: 0; mix-blend-mode: difference; }
.canvas .vbar { margin-right: 1px; padding-bottom: 24px; }
.notes { flex: none; height: 46px; margin-left: 2px; border-top: 1px solid #bdbdbd; padding-left: 12px; font-size: 17px; line-height: 40px; color: #666; }

.status { flex: none; height: 27px; display: flex; align-items: center; background: #f1f1f1; border-top: 1px solid #bdbdbd; padding: 0 6px 0 7px; font-size: 12px; line-height: 24px; color: #555; }
.status > span, .sn, .sc { padding-bottom: 2px; }
.count { width: 100px; }
.lang { margin-left: 16px; }
.sn { margin-left: auto; gap: 6px; }
.sc { gap: 5px; margin: 0 20px; }
.view { width: 41px; height: 26px; justify-content: center; }
.cur { background: #cacaca; }
.zb { width: 16px; justify-content: center; font-size: 20px; font-weight: 700; color: #666; line-height: 20px; }
.status input { appearance: none; width: 125px; height: 14px; margin: 0 4px 0 0; background: linear-gradient(#aaa, #aaa) 0 7px / 100% 1px no-repeat, linear-gradient(#aaa, #aaa) 63px 4px / 1px 7px no-repeat; }
.status input::-webkit-slider-thumb { appearance: none; width: 5px; height: 13px; background: #666; }
.pct { margin: 0 16px 0 13px; }

.taskbar { flex: none; height: 50px; display: flex; align-items: center; background: linear-gradient(to right, #1b1b1b, #1f1d1c 60%, #2a1719 80%, #371319); color: #fff; }
.start { width: 60px; justify-content: center; }
.find { flex: none; display: flex; align-items: center; gap: 13px; width: 429px; height: 50px; background: #f2f2f2; border: 1px solid #c6c6c6; padding-left: 15px; }
.find input { flex: 1; min-width: 0; border: 0; background: none; font: inherit; font-size: 18px; padding: 0; }
.find input::placeholder { color: #333; opacity: 1; }
.app-btn { flex: none; width: 62px; height: 50px; justify-content: center; }
.run { background: linear-gradient(#76b9ed, #76b9ed) 5px 47px / 51px 3px no-repeat; }
.active { background: linear-gradient(#76b9ed, #76b9ed) 0 47px / 62px 3px no-repeat, #4b4b4b; }
.tray { margin-left: auto; display: flex; align-items: center; gap: 12px; padding-right: 5px; }
.clock { display: flex; flex-direction: column; align-items: center; line-height: 23px; padding: 0 11px 2px 1px; }
.edge { width: 1px; height: 48px; background: #6b5a5c; margin-left: 12px; }
</style>
